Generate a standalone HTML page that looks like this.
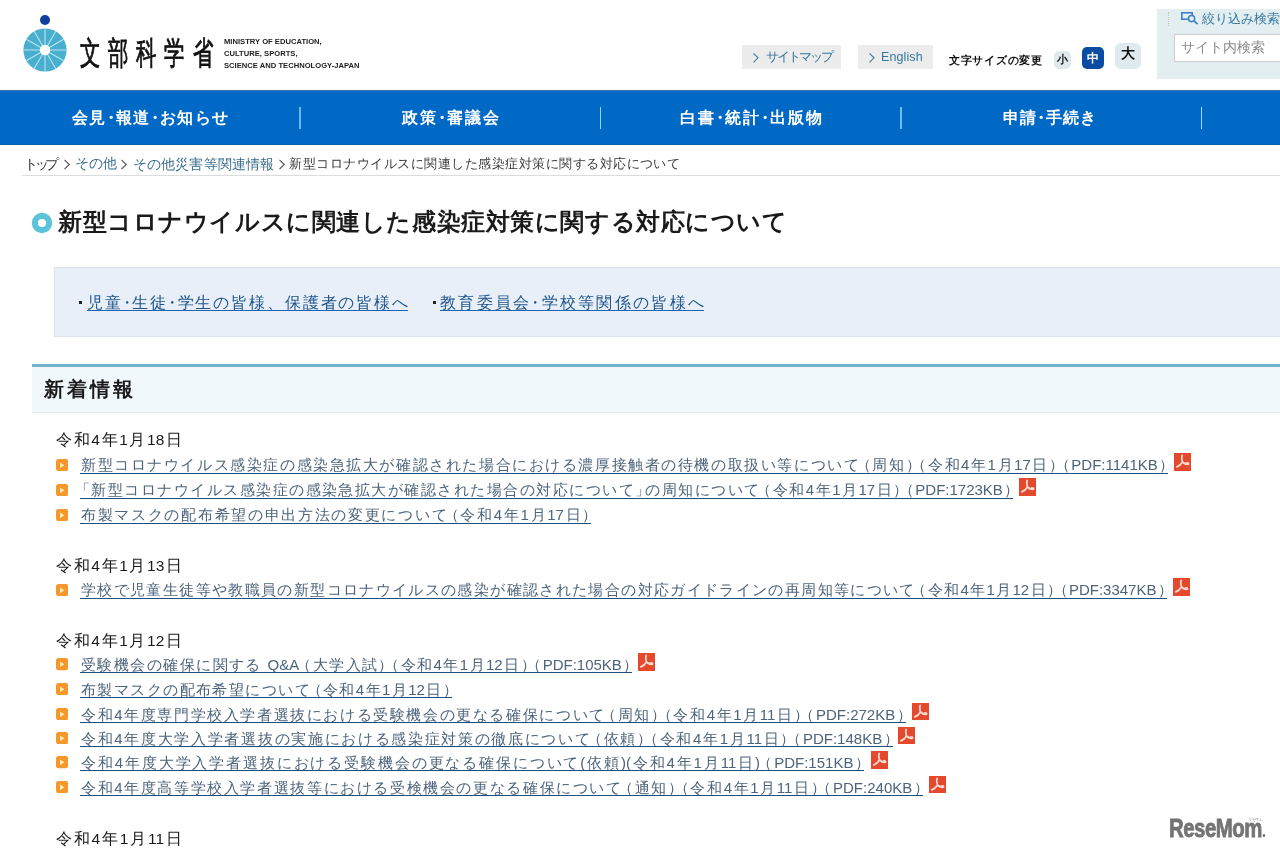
<!DOCTYPE html>
<html lang="ja">
<head>
<meta charset="utf-8">
<title>新型コロナウイルスに関連した感染症対策に関する対応について：文部科学省</title>
<style>
html,body{margin:0;padding:0;}
body{width:1280px;height:851px;overflow:hidden;position:relative;background:#fff;
  font-family:"Liberation Sans",sans-serif;color:#222;font-size:16px;}
#wrap{position:absolute;left:0;top:0;width:1280px;height:851px;overflow:hidden;will-change:transform;}
a{color:inherit;text-decoration:none;}
.abs{position:absolute;}
/* justify helper: forces a single line of text to an exact width */
.j{display:block;white-space:nowrap;text-align:justify;text-align-last:justify;}
.nd{display:inline-block;margin:0 -0.26em;} /* narrow middle dot */

/* ---------- header ---------- */
#logo-mark{left:21px;top:12.5px;width:48px;height:62px;}
#logo-ja{left:79.5px;top:38px;width:134px;height:30px;line-height:30px;font-size:20.5px;color:#111;
  transform:scaleY(1.57);transform-origin:50% 50%;-webkit-text-stroke:0.55px #111;}
#logo-en{left:224px;top:36px;font-size:7.6px;line-height:12px;font-weight:bold;color:#222;letter-spacing:0.02px;white-space:nowrap;}
.hbtn{top:45px;height:23.5px;line-height:24px;background:#ececec;color:#34789e;font-size:12.5px;white-space:nowrap;}
.hbtn svg{position:absolute;left:9.5px;top:6.5px;}
#fs-label{left:949px;top:52px;width:93px;height:17px;line-height:17px;font-size:11px;font-weight:bold;color:#111;}
.fs{border-radius:5px;background:#deeaee;color:#111;font-weight:bold;text-align:center;}
#search{left:1157px;top:9px;width:123px;height:70px;background:#e2eeef;}
#search .dots{position:absolute;left:11px;top:3px;height:14px;border-left:1px dotted #b9c6cb;}
#search .lbl{position:absolute;left:45px;top:2px;height:16px;line-height:16px;font-size:13px;color:#38789f;white-space:nowrap;}
#search .box{position:absolute;left:17px;top:25px;width:120px;height:27.5px;border:1px solid #cdcdcd;background:#fff;box-sizing:border-box;}
#search .ph{position:absolute;left:6px;top:0;height:25px;line-height:25px;font-size:14.2px;color:#8a8a8a;white-space:nowrap;}

/* ---------- global nav ---------- */
#nav{left:0;top:90px;width:1280px;height:55px;background:#0069c6;box-shadow:inset 0 1px 0 #2f6fa8, inset 0 -1px 0 #0b5cab;}
#nav .it{position:absolute;top:17px;height:22px;line-height:22px;font-size:16px;font-weight:bold;color:#fff;}
#nav .sep{position:absolute;top:16.8px;width:1px;height:22px;background:#9fd3f7;}

/* ---------- breadcrumb ---------- */
#crumb{left:22px;top:151px;width:1258px;height:24px;border-bottom:1px solid #dcdcdc;}
#crumb span{position:absolute;top:1.5px;height:22px;line-height:22px;font-size:14px;color:#3a3a3a;}
#crumb a{color:#3a6d8c;}
#crumb svg{position:absolute;top:7.5px;}

/* ---------- title ---------- */
#ttl-mark{left:31px;top:211.6px;width:22px;height:22px;}
#ttl{left:58px;top:204px;width:729px;height:36px;line-height:36px;font-size:24px;font-weight:bold;color:#1a1a1a;}

/* ---------- link box ---------- */
#lbox{left:54px;top:267px;width:1230px;height:70px;box-sizing:border-box;background:#e8eff9;border:1px solid #dde3ea;}
#lbox .b{position:absolute;top:22px;width:6px;height:25px;line-height:25px;font-size:16px;color:#111;text-align:center;}
#lbox .b i{display:block;position:absolute;left:1px;top:11px;width:3px;height:3px;background:#222;}
#lbox a{position:absolute;top:22px;height:25px;line-height:25px;font-size:16px;color:#20568c;}
.ul{position:absolute;left:0;right:0;height:0;border-top:2px solid #1f64ad;}

/* ---------- section heading ---------- */
#h2{left:32px;top:364px;width:1250px;height:48.5px;box-sizing:border-box;border-top:3.2px solid #70b3ca;border-bottom:1.5px solid #e5eaed;background:#f0f8fc;}
#h2 span{position:absolute;left:12.2px;top:7.8px;width:89px;height:28px;line-height:28px;font-size:20px;font-weight:bold;color:#1a1a1a;}

/* ---------- news list ---------- */
.date{position:absolute;left:56px;width:126px;height:25px;line-height:25px;font-size:15.5px;color:#1a1a1a;}
.row{position:absolute;left:0;height:25px;}
.row .bu{position:absolute;left:56px;top:6.6px;width:12.2px;height:12.2px;}
.row a{position:absolute;left:80px;top:0;box-sizing:border-box;padding-left:1px;height:25px;line-height:25px;font-size:15px;color:#4e647c;}
.row a .ul{top:20.5px;border-top:1.6px solid #1f4f7c;}
.pdf{position:absolute;top:1.4px;width:17.4px;height:17.3px;background:#e5492d;overflow:hidden;}
.pdf svg{position:absolute;left:0;top:0;}
#wm{left:1168.8px;top:812px;-webkit-text-stroke:0.8px #747474;height:32px;line-height:32px;font-size:25px;font-weight:bold;color:#747474;letter-spacing:-0.6px;white-space:nowrap;transform:scaleX(0.815);transform-origin:0 50%;}
#wm i{display:inline-block;width:3.4px;height:3px;background:#747474;border-radius:50%;margin-left:1px;}
#wm2{left:1248px;top:816.5px;height:6px;line-height:6px;font-size:4.2px;color:#808080;white-space:nowrap;letter-spacing:-0.3px;}
.pp{letter-spacing:-0.42em;margin-right:0.42em;}
.pe{margin-right:-0.42em;}
.po{margin-left:-0.42em;}
.pq{margin-left:-0.3em;}
</style>
</head>
<body>
<div id="wrap">

<!-- ================= header ================= -->
<svg id="logo-mark" class="abs" viewBox="0 0 48 62" width="48" height="62">
  <circle cx="24" cy="7" r="5" fill="#0c3f9e"/>
  <circle cx="24" cy="37" r="21.6" fill="#4aaece"/>
  <g stroke="#b4e6f5" stroke-width="1.1">
    <line x1="24" y1="15.4" x2="24" y2="58.6"/>
    <line x1="2.4" y1="37" x2="45.6" y2="37"/>
    <line x1="13.2" y1="18.3" x2="34.8" y2="55.7"/>
    <line x1="34.8" y1="18.3" x2="13.2" y2="55.7"/>
    <line x1="5.3" y1="26.2" x2="42.7" y2="47.8"/>
    <line x1="42.7" y1="26.2" x2="5.3" y2="47.8"/>
  </g>
  <circle cx="24" cy="37" r="5.2" fill="#fff"/>
</svg>
<div id="logo-ja" class="abs j">文部科学省</div>
<div id="logo-en" class="abs">MINISTRY OF EDUCATION,<br>CULTURE, SPORTS,<br>SCIENCE AND TECHNOLOGY-JAPAN</div>

<a class="abs hbtn" style="left:742px;width:99px;"><svg width="8" height="12" viewBox="0 0 8 12"><polyline points="1.5,1.3 6,5.8 1.5,10.3" fill="none" stroke="#4a7d9c" stroke-width="1.15"/></svg><span class="abs" style="left:23.5px;top:0;letter-spacing:-2px;">サイトマップ</span></a>
<a class="abs hbtn" style="left:858px;width:75px;"><svg width="8" height="12" viewBox="0 0 8 12"><polyline points="1.5,1.3 6,5.8 1.5,10.3" fill="none" stroke="#4a7d9c" stroke-width="1.15"/></svg><span class="abs" style="left:23px;top:0;letter-spacing:0.1px;">English</span></a>
<div id="fs-label" class="abs j">文字サイズの変更</div>
<div class="abs fs" style="left:1054px;top:51px;width:17px;height:17.5px;line-height:17px;font-size:11px;">小</div>
<div class="abs fs" style="left:1081.5px;top:46.5px;width:22.5px;height:22.5px;line-height:22px;font-size:12px;background:#0b4ca3;color:#fff;">中</div>
<div class="abs fs" style="left:1115px;top:42.5px;width:26px;height:26px;line-height:22px;font-size:13.5px;border-radius:6px;">大</div>

<div id="search" class="abs">
  <span class="dots"></span>
  <svg class="abs" style="left:24px;top:2.5px;" width="18" height="13" viewBox="0 0 18 13">
    <rect x="0.8" y="0.8" width="10.4" height="6.4" fill="none" stroke="#3f80c6" stroke-width="1.6"/>
    <circle cx="10.6" cy="6.6" r="3.1" fill="#e2eeef" stroke="#3f80c6" stroke-width="1.5"/>
    <line x1="12.8" y1="8.8" x2="16.6" y2="12.2" stroke="#3f80c6" stroke-width="1.8"/>
  </svg>
  <span class="lbl">絞り込み検索</span>
  <div class="box"><span class="ph">サイト内検索</span></div>
</div>

<!-- ================= global nav ================= -->
<div id="nav" class="abs">
  <span class="it j" style="left:72px;width:156px;">会見<span class="nd">・</span>報道<span class="nd">・</span>お知らせ</span>
  <span class="sep" style="left:299px;width:2.2px;background:#6cb7ef;"></span>
  <span class="it j" style="left:402px;width:97px;">政策<span class="nd">・</span>審議会</span>
  <span class="sep" style="left:599.8px;width:1.5px;background:#8fd6fc;"></span>
  <span class="it j" style="left:680px;width:142px;">白書<span class="nd">・</span>統計<span class="nd">・</span>出版物</span>
  <span class="sep" style="left:899.8px;width:2.3px;background:#6fbcf0;"></span>
  <span class="it j" style="left:1003px;width:93px;">申請<span class="nd">・</span>手続き</span>
  <span class="sep" style="left:1200.7px;width:1.4px;background:#a3ddfb;"></span>
</div>

<!-- ================= breadcrumb ================= -->
<div id="crumb" class="abs">
  <span class="j" style="left:2px;width:32px;letter-spacing:-3.4px;">トップ</span>
  <svg style="left:42.4px;" width="7" height="11" viewBox="0 0 7 11"><polyline points="0.5,0.8 5.3,5.5 0.5,10.2" fill="none" stroke="#555" stroke-width="1.1"/></svg>
  <span class="j" style="left:52.6px;width:41.5px;font-size:13.6px;"><a>その他</a></span>
  <svg style="left:99.3px;" width="7" height="11" viewBox="0 0 7 11"><polyline points="0.5,0.8 5.3,5.5 0.5,10.2" fill="none" stroke="#555" stroke-width="1.1"/></svg>
  <span class="j" style="left:110.7px;width:141.5px;"><a>その他災害等関連情報</a></span>
  <svg style="left:256.8px;" width="7" height="11" viewBox="0 0 7 11"><polyline points="0.5,0.8 5.3,5.5 0.5,10.2" fill="none" stroke="#555" stroke-width="1.1"/></svg>
  <span class="j" style="left:267.3px;width:390.7px;font-size:13.4px;">新型コロナウイルスに関連した感染症対策に関する対応について</span>
</div>

<!-- ================= title ================= -->
<svg id="ttl-mark" class="abs" viewBox="0 0 22 22"><circle cx="11" cy="11" r="7.15" fill="#fff" stroke="#5cc3dc" stroke-width="6.1"/></svg>
<h1 id="ttl" class="abs j" style="margin:0;">新型コロナウイルスに関連した感染症対策に関する対応について</h1>

<!-- ================= link box ================= -->
<div id="lbox" class="abs">
 <span class="b" style="left:23px;"><i></i></span><a class="j" style="left:32px;width:321px;">児童<span class="nd">・</span>生徒<span class="nd">・</span>学生の皆様、保護者の皆様へ<span class="ul" style="top:19.8px;border-top-width:1.6px;"></span></a>
 <span class="b" style="left:377px;"><i></i></span><a class="j" style="left:385px;width:264px;">教育委員会<span class="nd">・</span>学校等関係の皆様へ<span class="ul" style="top:19.8px;border-top-width:1.6px;"></span></a>
</div>

<!-- ================= section heading ================= -->
<div id="h2" class="abs"><span class="j">新着情報</span></div>

<!-- ================= news list ================= -->
<div class="date j" style="top:427.1px;">令和4年1月18日</div>
<div class="row" style="top:452.1px;"><svg class="bu" viewBox="0 0 12.2 12.2"><rect width="12.2" height="12.2" rx="2.6" fill="#f5972b"/><path d="M4.1 3.4L8.3 6.3L4.1 9.2Z" fill="#ffedb8"/></svg><a class="j" style="width:1088px;">新型コロナウイルス感染症の感染急拡大が確認された場合における濃厚接触者の待機の取扱い等について<span class="pq">（</span>周知<span class="pp">）<span class="pq">（</span></span>令和4年1月17日<span class="pp">）<span class="pq">（</span></span>PDF:1141KB<span class="pe">）</span><span class="ul"></span></a><span class="pdf" style="left:1174px;"><svg width="17.5" height="17.5" viewBox="0 0 17.5 17.5"><path d="M8.2 2.5C7.6 3.6 7.8 6.4 8.5 9C7.2 11.2 4.7 13.2 2.8 13.8M8.5 9C10.3 10.6 12.8 11.7 14.4 11.2C15.1 10.3 13.6 9.6 12.5 10.1" fill="none" stroke="#fcd9cf" stroke-width="1.8" stroke-linecap="round" stroke-linejoin="round"/></svg></span></div>
<div class="row" style="top:477.0px;"><svg class="bu" viewBox="0 0 12.2 12.2"><rect width="12.2" height="12.2" rx="2.6" fill="#f5972b"/><path d="M4.1 3.4L8.3 6.3L4.1 9.2Z" fill="#ffedb8"/></svg><a class="j" style="width:933px;"><span class="po">「</span>新型コロナウイルス感染症の感染急拡大が確認された場合の対応について<span class="pe">」</span>の周知について<span class="pq">（</span>令和4年1月17日<span class="pp">）<span class="pq">（</span></span>PDF:1723KB<span class="pe">）</span><span class="ul"></span></a><span class="pdf" style="left:1019px;"><svg width="17.5" height="17.5" viewBox="0 0 17.5 17.5"><path d="M8.2 2.5C7.6 3.6 7.8 6.4 8.5 9C7.2 11.2 4.7 13.2 2.8 13.8M8.5 9C10.3 10.6 12.8 11.7 14.4 11.2C15.1 10.3 13.6 9.6 12.5 10.1" fill="none" stroke="#fcd9cf" stroke-width="1.8" stroke-linecap="round" stroke-linejoin="round"/></svg></span></div>
<div class="row" style="top:502.0px;"><svg class="bu" viewBox="0 0 12.2 12.2"><rect width="12.2" height="12.2" rx="2.6" fill="#f5972b"/><path d="M4.1 3.4L8.3 6.3L4.1 9.2Z" fill="#ffedb8"/></svg><a class="j" style="width:511px;">布製マスクの配布希望の申出方法の変更について<span class="pq">（</span>令和4年1月17日<span class="pe">）</span><span class="ul"></span></a></div>
<div class="date j" style="top:552.5px;">令和4年1月13日</div>
<div class="row" style="top:577.0px;"><svg class="bu" viewBox="0 0 12.2 12.2"><rect width="12.2" height="12.2" rx="2.6" fill="#f5972b"/><path d="M4.1 3.4L8.3 6.3L4.1 9.2Z" fill="#ffedb8"/></svg><a class="j" style="width:1086.5px;">学校で児童生徒等や教職員の新型コロナウイルスの感染が確認された場合の対応ガイドラインの再周知等について<span class="pq">（</span>令和4年1月12日<span class="pp">）<span class="pq">（</span></span>PDF:3347KB<span class="pe">）</span><span class="ul"></span></a><span class="pdf" style="left:1172.5px;"><svg width="17.5" height="17.5" viewBox="0 0 17.5 17.5"><path d="M8.2 2.5C7.6 3.6 7.8 6.4 8.5 9C7.2 11.2 4.7 13.2 2.8 13.8M8.5 9C10.3 10.6 12.8 11.7 14.4 11.2C15.1 10.3 13.6 9.6 12.5 10.1" fill="none" stroke="#fcd9cf" stroke-width="1.8" stroke-linecap="round" stroke-linejoin="round"/></svg></span></div>
<div class="date j" style="top:627.8px;">令和4年1月12日</div>
<div class="row" style="top:651.9px;"><svg class="bu" viewBox="0 0 12.2 12.2"><rect width="12.2" height="12.2" rx="2.6" fill="#f5972b"/><path d="M4.1 3.4L8.3 6.3L4.1 9.2Z" fill="#ffedb8"/></svg><a class="j" style="width:552px;">受験機会の確保に関する Q&amp;A<span class="pq">（</span>大学入試<span class="pp">）<span class="pq">（</span></span>令和4年1月12日<span class="pp">）<span class="pq">（</span></span>PDF:105KB<span class="pe">）</span><span class="ul"></span></a><span class="pdf" style="left:638px;"><svg width="17.5" height="17.5" viewBox="0 0 17.5 17.5"><path d="M8.2 2.5C7.6 3.6 7.8 6.4 8.5 9C7.2 11.2 4.7 13.2 2.8 13.8M8.5 9C10.3 10.6 12.8 11.7 14.4 11.2C15.1 10.3 13.6 9.6 12.5 10.1" fill="none" stroke="#fcd9cf" stroke-width="1.8" stroke-linecap="round" stroke-linejoin="round"/></svg></span></div>
<div class="row" style="top:676.5px;"><svg class="bu" viewBox="0 0 12.2 12.2"><rect width="12.2" height="12.2" rx="2.6" fill="#f5972b"/><path d="M4.1 3.4L8.3 6.3L4.1 9.2Z" fill="#ffedb8"/></svg><a class="j" style="width:371.5px;">布製マスクの配布希望について<span class="pq">（</span>令和4年1月12日<span class="pe">）</span><span class="ul"></span></a></div>
<div class="row" style="top:701.6px;"><svg class="bu" viewBox="0 0 12.2 12.2"><rect width="12.2" height="12.2" rx="2.6" fill="#f5972b"/><path d="M4.1 3.4L8.3 6.3L4.1 9.2Z" fill="#ffedb8"/></svg><a class="j" style="width:825.5px;">令和4年度専門学校入学者選抜における受験機会の更なる確保について<span class="pq">（</span>周知<span class="pp">）<span class="pq">（</span></span>令和4年1月11日<span class="pp">）<span class="pq">（</span></span>PDF:272KB<span class="pe">）</span><span class="ul"></span></a><span class="pdf" style="left:911.5px;"><svg width="17.5" height="17.5" viewBox="0 0 17.5 17.5"><path d="M8.2 2.5C7.6 3.6 7.8 6.4 8.5 9C7.2 11.2 4.7 13.2 2.8 13.8M8.5 9C10.3 10.6 12.8 11.7 14.4 11.2C15.1 10.3 13.6 9.6 12.5 10.1" fill="none" stroke="#fcd9cf" stroke-width="1.8" stroke-linecap="round" stroke-linejoin="round"/></svg></span></div>
<div class="row" style="top:725.6px;"><svg class="bu" viewBox="0 0 12.2 12.2"><rect width="12.2" height="12.2" rx="2.6" fill="#f5972b"/><path d="M4.1 3.4L8.3 6.3L4.1 9.2Z" fill="#ffedb8"/></svg><a class="j" style="width:812.5px;">令和4年度大学入学者選抜の実施における感染症対策の徹底について<span class="pq">（</span>依頼<span class="pp">）<span class="pq">（</span></span>令和4年1月11日<span class="pp">）<span class="pq">（</span></span>PDF:148KB<span class="pe">）</span><span class="ul"></span></a><span class="pdf" style="left:898px;"><svg width="17.5" height="17.5" viewBox="0 0 17.5 17.5"><path d="M8.2 2.5C7.6 3.6 7.8 6.4 8.5 9C7.2 11.2 4.7 13.2 2.8 13.8M8.5 9C10.3 10.6 12.8 11.7 14.4 11.2C15.1 10.3 13.6 9.6 12.5 10.1" fill="none" stroke="#fcd9cf" stroke-width="1.8" stroke-linecap="round" stroke-linejoin="round"/></svg></span></div>
<div class="row" style="top:749.9px;"><svg class="bu" viewBox="0 0 12.2 12.2"><rect width="12.2" height="12.2" rx="2.6" fill="#f5972b"/><path d="M4.1 3.4L8.3 6.3L4.1 9.2Z" fill="#ffedb8"/></svg><a class="j" style="width:784px;">令和4年度大学入学者選抜における受験機会の更なる確保について(依頼)(令和4年1月11日)<span class="pq">（</span>PDF:151KB<span class="pe">）</span><span class="ul"></span></a><span class="pdf" style="left:870.5px;"><svg width="17.5" height="17.5" viewBox="0 0 17.5 17.5"><path d="M8.2 2.5C7.6 3.6 7.8 6.4 8.5 9C7.2 11.2 4.7 13.2 2.8 13.8M8.5 9C10.3 10.6 12.8 11.7 14.4 11.2C15.1 10.3 13.6 9.6 12.5 10.1" fill="none" stroke="#fcd9cf" stroke-width="1.8" stroke-linecap="round" stroke-linejoin="round"/></svg></span></div>
<div class="row" style="top:774.5px;"><svg class="bu" viewBox="0 0 12.2 12.2"><rect width="12.2" height="12.2" rx="2.6" fill="#f5972b"/><path d="M4.1 3.4L8.3 6.3L4.1 9.2Z" fill="#ffedb8"/></svg><a class="j" style="width:842.5px;">令和4年度高等学校入学者選抜等における受検機会の更なる確保について<span class="pq">（</span>通知<span class="pp">）<span class="pq">（</span></span>令和4年1月11日<span class="pp">）<span class="pq">（</span></span>PDF:240KB<span class="pe">）</span><span class="ul"></span></a><span class="pdf" style="left:929px;"><svg width="17.5" height="17.5" viewBox="0 0 17.5 17.5"><path d="M8.2 2.5C7.6 3.6 7.8 6.4 8.5 9C7.2 11.2 4.7 13.2 2.8 13.8M8.5 9C10.3 10.6 12.8 11.7 14.4 11.2C15.1 10.3 13.6 9.6 12.5 10.1" fill="none" stroke="#fcd9cf" stroke-width="1.8" stroke-linecap="round" stroke-linejoin="round"/></svg></span></div>
<div class="date j" style="top:825.8px;">令和4年1月11日</div>

<!-- ================= watermark ================= -->
<div id="wm" class="abs">ReseMom<i></i></div>
<div id="wm2" class="abs">リセマム</div>

</div>
</body>
</html>
